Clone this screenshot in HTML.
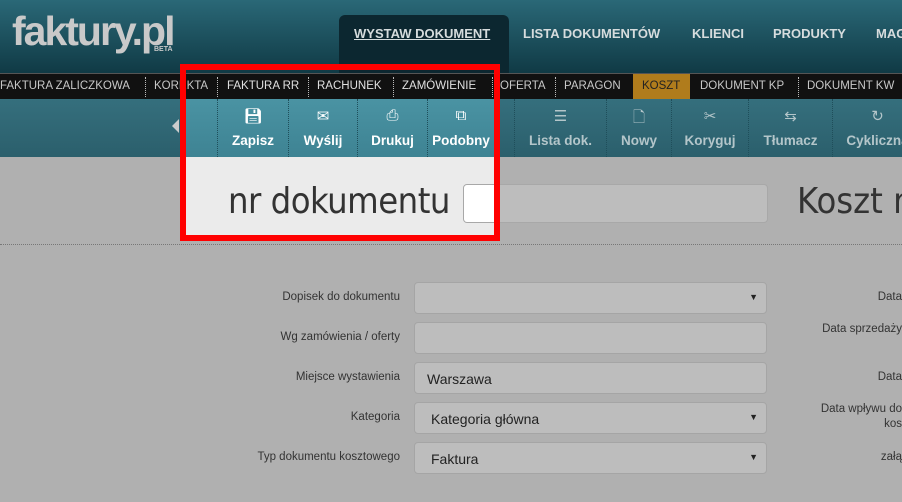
<!DOCTYPE html>
<html><head><meta charset="utf-8"><style>
*{margin:0;padding:0;box-sizing:border-box}
body{width:902px;height:502px;overflow:hidden;background:#b0b0b0;font-family:"Liberation Sans",sans-serif;position:relative}
.a{position:absolute}
#hdr{left:0;top:0;width:902px;height:73px;background:linear-gradient(#2a6877,#103a45)}
#logo{left:12px;top:8px;font:bold 41px "Liberation Sans",sans-serif;color:#c9c9c9;letter-spacing:-2px}
#beta{left:154px;top:46px;font:bold 7px sans-serif;color:#c9c9c9}
.tab{top:26px;font:bold 13px "Liberation Sans",sans-serif;color:#d6dcdd}
#act{left:339px;top:15px;width:170px;height:58px;background:#0c2730;border-radius:6px 6px 0 0}
#sub{left:0;top:73px;width:902px;height:26px;background:#111;border-top:1px solid #555}
.s{top:80px;font:11.5px "Liberation Sans",sans-serif;color:#c8c8c8;white-space:nowrap}
.d{top:77px;height:20px;border-left:1px dotted #bbb}
#tb{left:0;top:99px;width:902px;height:58px;background:linear-gradient(#356f7d,#2b5f6c)}
.b{top:99px;height:58px;border-left:1px dotted #1f4e5a;text-align:center;color:#b4c6ca;font:bold 13.5px "Liberation Sans",sans-serif}
.b .i{display:block;height:22px;margin-top:8px;font-size:15px;font-weight:normal}
.b .t{display:block;margin-top:4px}
#hl{left:186px;top:99px;width:308px;height:136px;background:#ebebeb}
#hltb{left:186px;top:99px;width:308px;height:58px;background:linear-gradient(#4a93a3,#3e8393)}
#red{left:180px;top:64px;width:320px;height:177px;border:6px solid #f00}
.lbl{font:11.5px "Liberation Sans",sans-serif;color:#333;text-align:right;width:240px;left:160px}
.in{left:414px;width:353px;height:32px;background:#bdbdbd;border:1px solid #a5a5a5;border-radius:4px;font:14px "Liberation Sans",sans-serif;color:#222;padding:8px 0 0 16px}
.ar{position:absolute;right:8px;top:9px;font-size:9px;color:#222}
.rl{font:11.5px "Liberation Sans",sans-serif;color:#333;right:0;text-align:right;white-space:nowrap}
</style></head><body>
<div id="hdr" class="a"></div>
<div id="logo" class="a">faktury.pl</div>
<div id="beta" class="a">BETA</div>
<div id="act" class="a"></div>
<div class="a tab" style="left:354px;text-decoration:underline">WYSTAW DOKUMENT</div>
<div class="a tab" style="left:523px">LISTA DOKUMENTÓW</div>
<div class="a tab" style="left:692px">KLIENCI</div>
<div class="a tab" style="left:773px">PRODUKTY</div>
<div class="a tab" style="left:876px">MAG</div>
<div id="sub" class="a"></div>
<div class="a s" style="left:0">FAKTURA ZALICZKOWA</div><div class="a d" style="left:145px"></div>
<div class="a s" style="left:154px">KOREKTA</div><div class="a d" style="left:217px"></div>
<div class="a s" style="left:227px;color:#e0e0e0">FAKTURA RR</div><div class="a d" style="left:308px"></div>
<div class="a s" style="left:317px;color:#e0e0e0">RACHUNEK</div><div class="a d" style="left:393px"></div>
<div class="a s" style="left:402px;color:#e0e0e0">ZAMÓWIENIE</div><div class="a d" style="left:492px"></div>
<div class="a s" style="left:500px">OFERTA</div><div class="a d" style="left:555px"></div>
<div class="a s" style="left:564px">PARAGON</div>
<div class="a" style="left:633px;top:74px;width:57px;height:25px;background:#b07c1c"></div>
<div class="a s" style="left:642px;color:#222">KOSZT</div>
<div class="a s" style="left:700px">DOKUMENT KP</div><div class="a d" style="left:798px"></div>
<div class="a s" style="left:807px">DOKUMENT KW</div>
<div id="tb" class="a"></div>
<div id="hl" class="a"></div>
<div id="hltb" class="a"></div>
<div class="a" style="left:172px;top:119px;width:0;height:0;border:7px solid transparent;border-right-color:#ccc;border-left:0"></div>
<div class="a b" style="left:217px;width:71px;color:#fff"><span class="i">💾︎</span><span class="t">Zapisz</span></div>
<div class="a b" style="left:288px;width:69px;color:#fff"><span class="i">✉</span><span class="t">Wyślij</span></div>
<div class="a b" style="left:357px;width:70px;color:#fff"><span class="i">⎙</span><span class="t">Drukuj</span></div>
<div class="a b" style="left:427px;width:67px;color:#fff;overflow:hidden;white-space:nowrap"><span class="i">⧉</span><span class="t">Podobny</span></div>
<div class="a b" style="left:514px;width:92px"><span class="i">☰</span><span class="t">Lista dok.</span></div>
<div class="a b" style="left:606px;width:65px"><span class="i">🗋︎</span><span class="t">Nowy</span></div>
<div class="a b" style="left:671px;width:77px"><span class="i">✂</span><span class="t">Koryguj</span></div>
<div class="a b" style="left:748px;width:84px"><span class="i">⇆</span><span class="t">Tłumacz</span></div>
<div class="a b" style="left:832px;width:90px"><span class="i">↻</span><span class="t">Cykliczna</span></div>
<div class="a" style="left:228px;top:181px;font:36px 'DejaVu Sans Condensed','Liberation Sans Narrow',sans-serif;color:#333;letter-spacing:-0.5px">nr dokumentu</div>
<div class="a" style="left:463px;top:184px;width:305px;height:39px;background:#bdbdbd;border:1px solid #a8a8a8;border-radius:4px"></div>
<div class="a" style="left:464px;top:185px;width:30px;height:37px;background:#fff;border-radius:3px 0 0 3px"></div>
<div class="a" style="left:797px;top:181px;font:36px 'DejaVu Sans Condensed','Liberation Sans Narrow',sans-serif;color:#333;white-space:nowrap">Koszt nr</div>
<div id="red" class="a"></div>
<div class="a" style="left:0;top:244px;width:902px;border-top:1px dotted #777"></div>
<div class="a lbl" style="top:291px">Dopisek do dokumentu</div>
<div class="a lbl" style="top:331px">Wg zamówienia / oferty</div>
<div class="a lbl" style="top:371px">Miejsce wystawienia</div>
<div class="a lbl" style="top:411px">Kategoria</div>
<div class="a lbl" style="top:451px">Typ dokumentu kosztowego</div>
<div class="a in" style="top:282px"><span class="ar">▼</span></div>
<div class="a in" style="top:322px"></div>
<div class="a in" style="top:362px;padding-left:12px">Warszawa</div>
<div class="a in" style="top:402px">Kategoria główna<span class="ar">▼</span></div>
<div class="a in" style="top:442px">Faktura<span class="ar">▼</span></div>
<div class="a rl" style="top:291px">Data</div>
<div class="a rl" style="top:323px">Data sprzedaży</div>
<div class="a rl" style="top:371px">Data</div>
<div class="a rl" style="top:403px">Data wpływu do</div>
<div class="a rl" style="top:418px">kos</div>
<div class="a rl" style="top:451px">załą</div>
</body></html>
